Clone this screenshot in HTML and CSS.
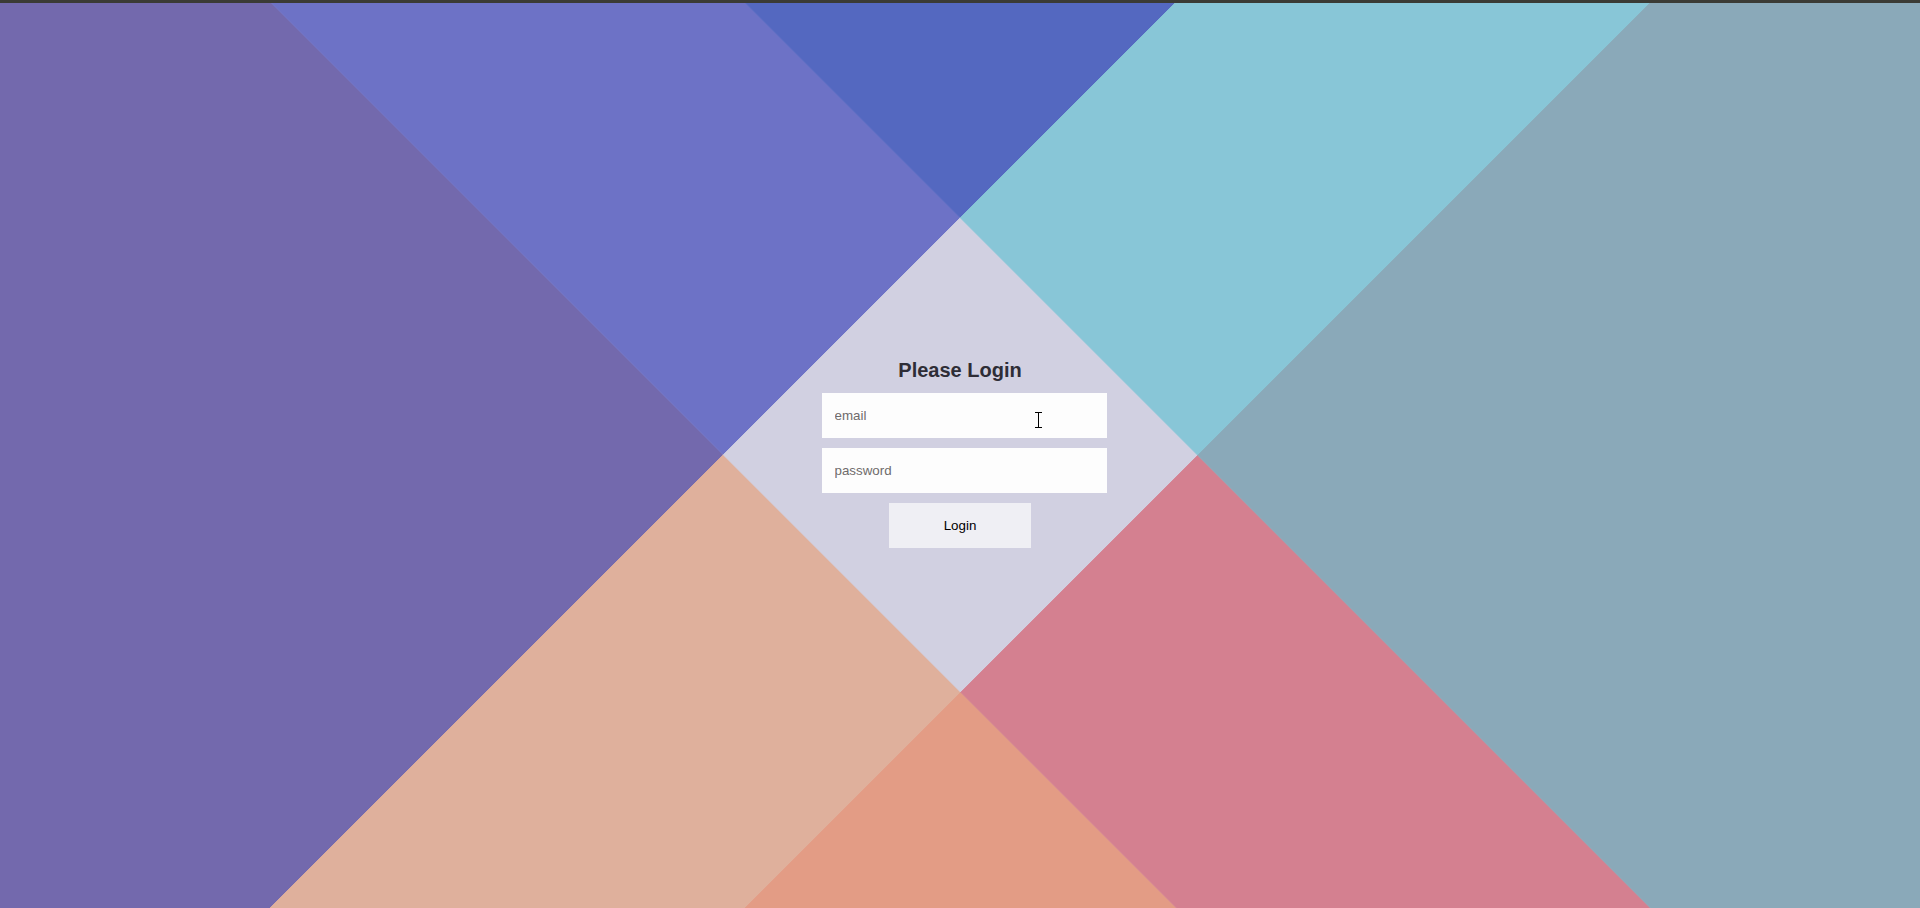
FILE: index.html
```html
<!DOCTYPE html>
<html lang="en">
<head>
<meta charset="utf-8">
<title>Please Login</title>
<link rel="stylesheet" href="styles.css">
</head>
<body>
<div class="topbar"></div>
<main class="stage">
  <svg class="backdrop" viewBox="0 3 1920 905" preserveAspectRatio="none" aria-hidden="true">
    <rect x="0" y="0" width="1920" height="908" fill="#d1d0e1"/>
    <polygon fill="#7369ad" stroke="#7369ad" points="-600,500 39,1139 723.25,454.75 84.25,-184.25"/>
    <polygon fill="#6d72c6" stroke="#6d72c6" points="84.25,-184.25 723.25,454.75 960.25,217.75 321.25,-421.25"/>
    <polygon fill="#5468c0" stroke="#5468c0" points="321.25,-421.25 960.25,217.75 1639,-461 1000,-1100"/>
    <polygon fill="#dfb09c" stroke="#dfb09c" points="39,1139 276.5,1376.5 960.75,692.25 723.25,454.75"/>
    <polygon fill="#d1d0e1" stroke="#d1d0e1" points="723.25,454.75 960.75,692.25 1197.75,455.25 960.25,217.75"/>
    <polygon fill="#88c6d7" stroke="#88c6d7" points="960.25,217.75 1197.75,455.25 1876.5,-223.5 1639,-461"/>
    <polygon fill="#e39c85" stroke="#e39c85" points="276.5,1376.5 950,2050 1634.25,1365.75 960.75,692.25"/>
    <polygon fill="#d48090" stroke="#d48090" points="960.75,692.25 1634.25,1365.75 1871.25,1128.75 1197.75,455.25"/>
    <polygon fill="#8aa9b9" stroke="#8aa9b9" points="1197.75,455.25 1871.25,1128.75 2550,450 1876.5,-223.5"/>
  </svg>
  <form class="login">
    <h1 class="login-title">Please Login</h1>
    <div class="field">
      <input class="login-input" type="text" placeholder="email">
      <svg class="ibeam" width="7" height="16" viewBox="0 0 7 16" aria-hidden="true"><path d="M0 0.5h7M3.5 0.5v15M0 15.5h7" stroke="#000" stroke-width="1" fill="none"/></svg>
    </div>
    <div class="field">
      <input class="login-input" type="password" placeholder="password">
    </div>
    <button class="login-btn" type="button">Login</button>
  </form>
</main>
</body>
</html>
```

FILE: styles.css
```css
* {
  box-sizing: border-box;
}

html, body {
  margin: 0;
  padding: 0;
  height: 100%;
  overflow: hidden;
}

body {
  display: flex;
  flex-direction: column;
  font-family: "Liberation Sans", Arial, sans-serif;
  background: #d1d0e1;
}

.topbar {
  height: 3px;
  flex: none;
  background: #3b3b35;
}

.stage {
  position: relative;
  flex: 1;
  display: flex;
  align-items: center;
  justify-content: center;
}

.backdrop {
  position: absolute;
  left: 0;
  top: 0;
  width: 100%;
  height: 100%;
  display: block;
  stroke-width: 0.8;
}

.login {
  position: relative;
  z-index: 1;
  display: flex;
  flex-direction: column;
  align-items: center;
  margin: 0 0 5px 0;
}

.login-title {
  margin: 0 0 11px;
  font-size: 20px;
  line-height: 23px;
  font-weight: 700;
  color: #2e2d36;
}

.field {
  position: relative;
  width: 285px;
  margin-left: 8px;
  margin-bottom: 10px;
}

.login-input {
  display: block;
  width: 100%;
  height: 45px;
  border: none;
  outline: none;
  padding: 0 13px;
  background: #fdfdfd;
  font-family: "Liberation Sans", Arial, sans-serif;
  font-size: 13.33px;
  color: #333;
}

.login-input::placeholder {
  color: #6f6b6b;
}

.ibeam {
  position: absolute;
  left: 213px;
  top: 19px;
}

.login-btn {
  width: 142px;
  height: 45px;
  border: none;
  margin-top: 0;
  background: #efeff4;
  font-family: "Liberation Sans", Arial, sans-serif;
  font-size: 13.33px;
  color: #000;
  cursor: pointer;
}
```
